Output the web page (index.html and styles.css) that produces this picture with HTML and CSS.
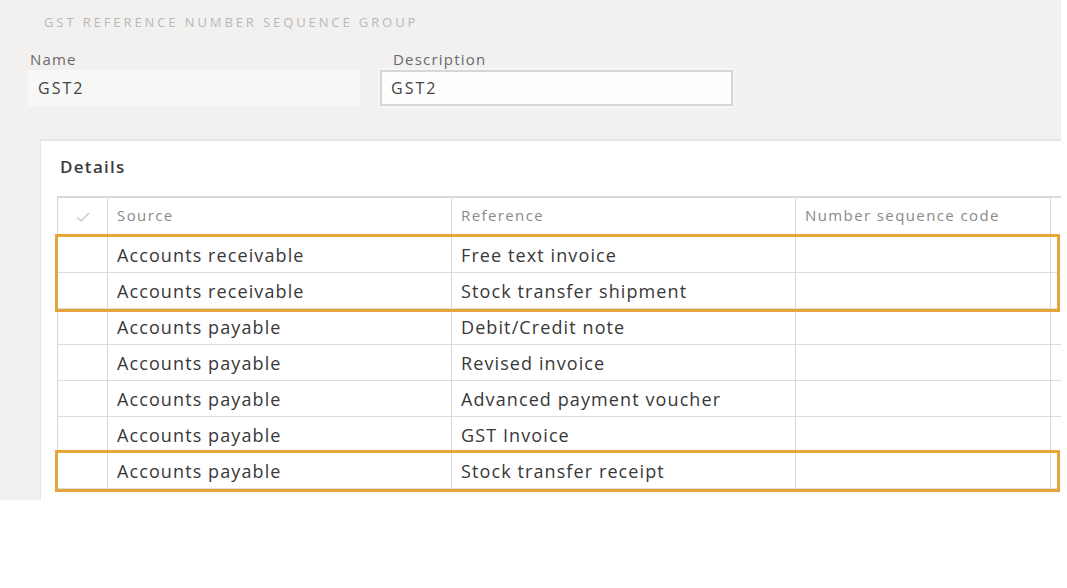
FILE: index.html
```html
<!DOCTYPE html>
<html>
<head>
<meta charset="utf-8">
<link rel="stylesheet" href="styles.css">
</head>
<body>
<div class="page">
  <div class="title">GST REFERENCE NUMBER SEQUENCE GROUP</div>
  <div class="fields">
    <div class="field name-field">
      <div class="label">Name</div>
      <div class="value readonly">GST2</div>
    </div>
    <div class="field desc-field">
      <div class="label">Description</div>
      <div class="value input">GST2</div>
    </div>
  </div>
  <div class="card">
    <div class="card-title">Details</div>
    <div class="grid">
      <div class="row head">
        <div class="cell chk"><svg width="14" height="10" viewBox="0 0 14 10"><path d="M1 5.5 L5 9 L13 1" fill="none" stroke="#c4c4c4" stroke-width="1.2"/></svg></div>
        <div class="cell">Source</div>
        <div class="cell">Reference</div>
        <div class="cell">Number sequence code</div>
        <div class="cell last"></div>
      </div>
      <div class="group hl">
        <div class="row"><div class="cell chk"></div><div class="cell">Accounts receivable</div><div class="cell">Free text invoice</div><div class="cell"></div><div class="cell last"></div></div>
        <div class="row"><div class="cell chk"></div><div class="cell">Accounts receivable</div><div class="cell">Stock transfer shipment</div><div class="cell"></div><div class="cell last"></div></div>
      </div>
      <div class="row"><div class="cell chk"></div><div class="cell">Accounts payable</div><div class="cell">Debit/Credit note</div><div class="cell"></div><div class="cell last"></div></div>
      <div class="row"><div class="cell chk"></div><div class="cell">Accounts payable</div><div class="cell">Revised invoice</div><div class="cell"></div><div class="cell last"></div></div>
      <div class="row"><div class="cell chk"></div><div class="cell">Accounts payable</div><div class="cell">Advanced payment voucher</div><div class="cell"></div><div class="cell last"></div></div>
      <div class="row"><div class="cell chk"></div><div class="cell">Accounts payable</div><div class="cell">GST Invoice</div><div class="cell"></div><div class="cell last"></div></div>
      <div class="group hl">
        <div class="row"><div class="cell chk"></div><div class="cell">Accounts payable</div><div class="cell">Stock transfer receipt</div><div class="cell"></div><div class="cell last"></div></div>
      </div>
    </div>
  </div>
</div>
</body>
</html>
```

FILE: styles.css
```css
html, body {
  margin: 0;
  padding: 0;
  background: #ffffff;
}
body {
  font-family: "Open Sans", "Noto Sans", sans-serif;
  color: #333;
}
.page {
  width: 1061px;
  height: 500px;
  background: #f2f1f0;
  overflow: hidden;
  display: flex;
  flex-direction: column;
}
.title {
  padding: 14px 0 0 44px;
  height: 16px;
  font-size: 13px;
  line-height: 16px;
  letter-spacing: 2.9px;
  color: #b8b8b8;
}
.fields {
  display: flex;
  margin-top: 21px;
}
.field .label {
  font-size: 15px;
  line-height: 16px;
  letter-spacing: 1.2px;
  color: #6a6a6a;
}
.name-field {
  margin-left: 28px;
  width: 340px;
}
.name-field .label {
  padding-left: 2px;
}
.desc-field {
  margin-left: 12px;
}
.desc-field .label {
  padding-left: 13px;
}
.value {
  height: 36px;
  line-height: 36px;
  font-size: 16px;
  letter-spacing: 2px;
  color: #444;
  margin-top: 3px;
  box-sizing: border-box;
}
.readonly {
  width: 332px;
  background: #f7f7f6;
  padding-left: 10px;
}
.input {
  width: 353px;
  background: #fefefe;
  border: 2px solid #d6d6d6;
  box-shadow: 0 0 0 2px #f6f6f6;
  padding-left: 9px;
  line-height: 32px;
}
.card {
  margin: 33px 0 0 40px;
  flex: 1;
  background: #fff;
  border-top: 2px solid #e4e4e4;
  border-left: 1px solid #e6e6e6;
  padding-left: 16px;
}
.card-title {
  height: 55px;
  line-height: 51px;
  font-size: 17px;
  letter-spacing: 1.3px;
  font-weight: 600;
  color: #3c3c3c;
  padding-left: 3px;
}
.grid {
  border-top: 2px solid #d9d9d9;
  border-left: 1px solid #d6d6d6;
}
.row {
  display: grid;
  grid-template-columns: 50px 344px 344px 255px 20px;
  height: 36px;
  border-bottom: 1px solid #dcdcdc;
  box-sizing: border-box;
}
.row.head {
  height: 39px;
  border-bottom: 1px solid #d4d4d4;
}
.cell {
  border-right: 1px solid #d9d9d9;
  padding-left: 9px;
  font-size: 18px;
  letter-spacing: 1.1px;
  line-height: 37px;
  color: #383838;
  white-space: nowrap;
  overflow: hidden;
}
.cell.last {
  border-right: none;
}
.head .cell {
  font-size: 15px;
  letter-spacing: 1.4px;
  line-height: 35px;
  color: #8a8a8a;
}
.cell.chk {
  padding-left: 0;
  display: flex;
  align-items: center;
  justify-content: center;
}
.group.hl {
  outline: 3px solid #e6a43c;
  outline-offset: 0;
  margin-right: 4px;
}
```
